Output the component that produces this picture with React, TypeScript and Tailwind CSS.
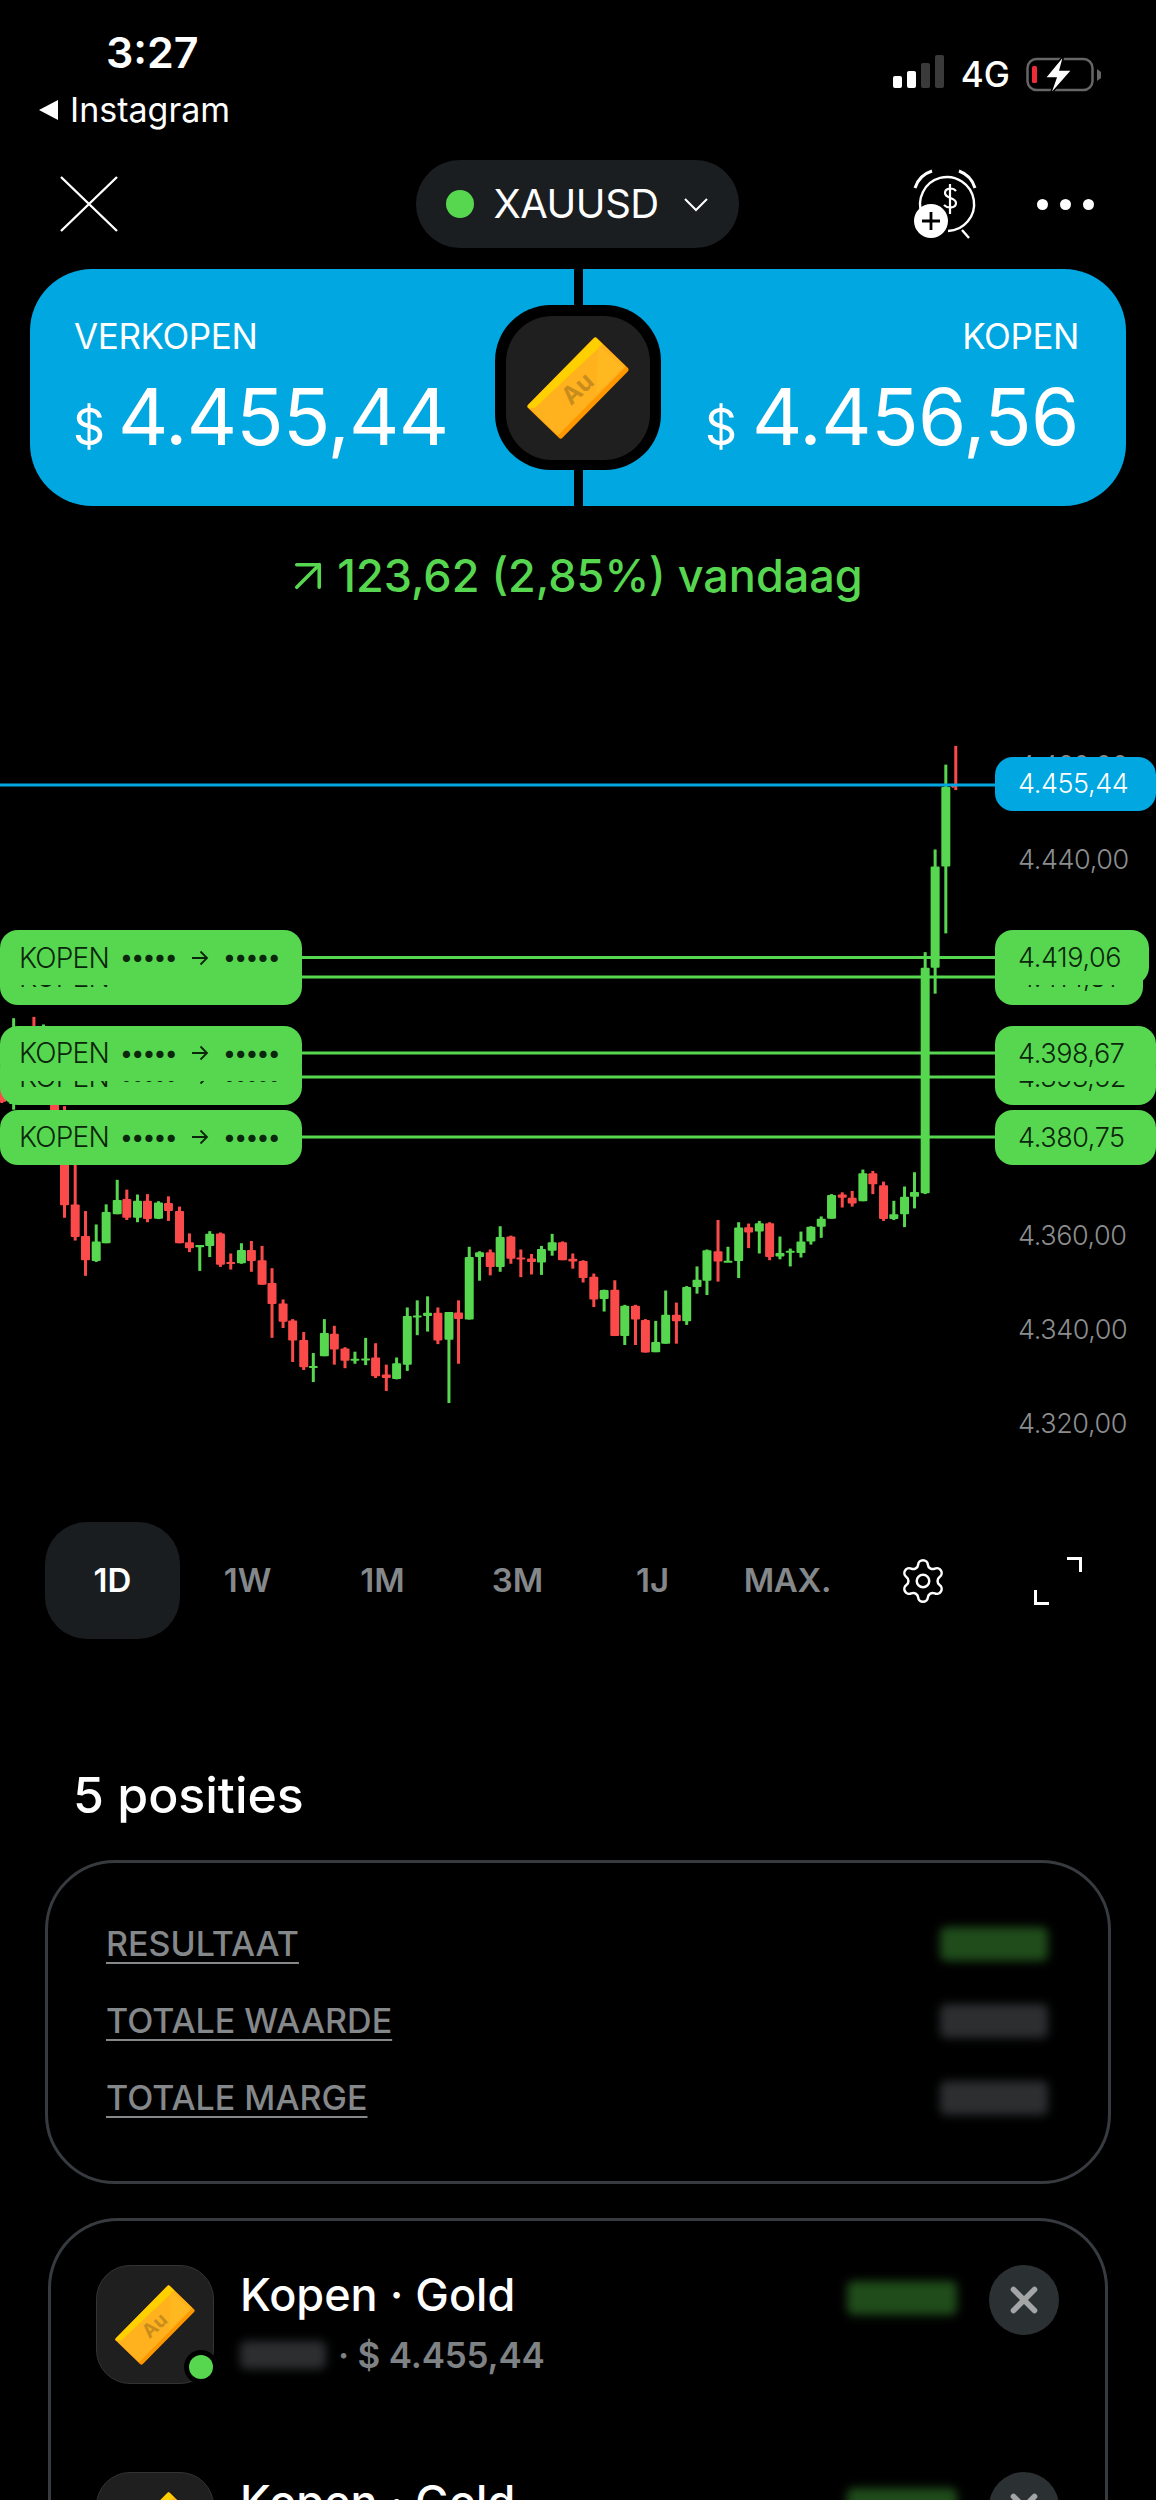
import React from "react";
import { ArrowUpRight, Settings, X } from "lucide-react";

// candles measured off the chart: [x, wickTop, wickBottom, bodyTop, bodyBottom, up]
type Candle = [number, number, number, number, number, number];

const candles: Candle[] = [
  [37, 668, 873, 720, 860, 1], [92, 665, 700, 690, 700, 0], [118, 682, 700, 690, 700, 1], [148, 700, 875, 720, 875, 0],
  [5, 800, 858, 810, 855, 0], [175, 865, 1115, 990, 1087, 0], [204, 995, 1166, 1085, 1158, 0], [232, 1100, 1245, 1156, 1210, 0],
  [261, 1130, 1214, 1168, 1212, 1], [288, 1085, 1172, 1102, 1172, 1], [318, 1030, 1107, 1075, 1107, 1], [344, 1052, 1120, 1073, 1115, 0],
  [373, 1063, 1125, 1077, 1115, 1], [400, 1062, 1125, 1077, 1118, 0], [430, 1078, 1118, 1081, 1117, 1], [457, 1067, 1122, 1082, 1100, 0],
  [487, 1090, 1172, 1100, 1172, 0], [514, 1150, 1192, 1170, 1183, 0], [542, 1176, 1234, 1176, 1181, 1], [569, 1145, 1203, 1151, 1178, 1],
  [598, 1148, 1225, 1150, 1220, 0], [626, 1195, 1231, 1214, 1218, 0], [655, 1172, 1218, 1187, 1217, 1], [682, 1167, 1236, 1187, 1212, 0],
  [711, 1178, 1265, 1210, 1265, 0], [738, 1228, 1384, 1261, 1308, 0], [768, 1298, 1362, 1307, 1348, 0], [794, 1342, 1438, 1345, 1390, 0],
  [824, 1371, 1456, 1389, 1450, 0], [850, 1418, 1483, 1447, 1450, 1], [880, 1342, 1425, 1373, 1425, 1], [907, 1357, 1444, 1375, 1410, 0],
  [936, 1405, 1452, 1408, 1435, 0], [963, 1415, 1442, 1431, 1435, 1], [992, 1384, 1445, 1430, 1433, 1], [1019, 1396, 1474, 1428, 1470, 0],
  [1048, 1444, 1503, 1466, 1474, 0], [1076, 1428, 1477, 1441, 1476, 1], [1105, 1316, 1458, 1335, 1444, 1], [1132, 1300, 1378, 1334, 1337, 1],
  [1160, 1291, 1370, 1328, 1335, 1], [1188, 1316, 1398, 1328, 1390, 0], [1218, 1326, 1530, 1326, 1388, 1], [1244, 1300, 1442, 1327, 1342, 0],
  [1273, 1180, 1343, 1203, 1343, 1], [1301, 1190, 1256, 1192, 1203, 1], [1330, 1186, 1244, 1192, 1225, 0], [1357, 1134, 1236, 1158, 1225, 1],
  [1386, 1155, 1218, 1157, 1207, 0], [1413, 1186, 1248, 1204, 1208, 0], [1442, 1196, 1242, 1206, 1214, 0], [1469, 1178, 1243, 1185, 1215, 1],
  [1498, 1151, 1200, 1170, 1189, 1], [1526, 1168, 1210, 1170, 1210, 0], [1554, 1195, 1229, 1207, 1213, 0],
  [1582, 1210, 1260, 1212, 1250, 0], [1611, 1240, 1315, 1247, 1298, 0], [1639, 1276, 1325, 1277, 1297, 1], [1668, 1255, 1380, 1276, 1380, 0],
  [1695, 1310, 1400, 1312, 1380, 1], [1724, 1310, 1400, 1312, 1343, 0], [1751, 1342, 1417, 1344, 1417, 0], [1779, 1346, 1416, 1393, 1416, 1],
  [1806, 1278, 1397, 1332, 1397, 1], [1835, 1305, 1397, 1332, 1347, 0], [1863, 1268, 1355, 1270, 1347, 1], [1891, 1224, 1285, 1254, 1270, 1],
  [1918, 1186, 1288, 1188, 1256, 1], [1948, 1120, 1258, 1190, 1213, 0], [1975, 1180, 1214, 1211, 1214, 1], [2004, 1125, 1250, 1137, 1212, 1],
  [2031, 1128, 1183, 1136, 1148, 0], [2060, 1122, 1195, 1127, 1146, 1], [2088, 1125, 1210, 1127, 1203, 0], [2116, 1157, 1208, 1194, 1202, 1],
  [2144, 1184, 1224, 1189, 1192, 1], [2173, 1146, 1204, 1168, 1194, 1], [2200, 1134, 1175, 1135, 1168, 1], [2228, 1112, 1160, 1117, 1135, 1],
  [2256, 1062, 1117, 1064, 1117, 1], [2285, 1058, 1092, 1063, 1070, 0], [2312, 1055, 1090, 1070, 1083, 0], [2341, 1007, 1078, 1015, 1078, 1],
  [2368, 1010, 1062, 1015, 1040, 0], [2397, 1034, 1122, 1042, 1118, 0], [2425, 1077, 1120, 1107, 1118, 1], [2454, 1045, 1136, 1068, 1107, 1],
  [2481, 1013, 1094, 1057, 1068, 1], [2510, 520, 1062, 555, 1060, 1], [2537, 290, 613, 328, 555, 1], [2566, 100, 478, 150, 328, 1],
  [2593, 58, 157, 145, 152, 0],
];

const CHART_TOP = 608;
const GREEN = "#57d750";
const RED = "#fb4a4a";

// chart was read off a crop scaled 2.713 x 2.24, starting at y=720
const cx = (v: number) => v / 2.713;
const cy = (v: number) => 720 + v / 2.24 - CHART_TOP;

const axis = [
  { label: "4.460,00", y: 766 },
  { label: "4.440,00", y: 860 },
  { label: "4.360,00", y: 1236 },
  { label: "4.340,00", y: 1330 },
  { label: "4.320,00", y: 1424 },
];

// order matters, the later ones sit on top of the earlier ones
const orders = [
  { y: 977, price: "4.414,81", w: 148 },
  { y: 957.5, price: "4.419,06", w: 154 },
  { y: 1077, price: "4.393,52", w: 161 },
  { y: 1053, price: "4.398,67", w: 161 },
  { y: 1137, price: "4.380,75", w: 161 },
];

const GoldBar = ({ size }: { size: number }) => (
  <svg width={size} height={size} viewBox="-50 -50 100 100">
    <polygon points="17,-47 47,-18 -17,47 -47,18" fill="#ff9800" stroke="#ff9800" strokeWidth="5" strokeLinejoin="round" />
    <polygon points="17,-47 44,-21 -20,44 -47,18" fill="#ffb21e" stroke="#ffb21e" strokeWidth="4" strokeLinejoin="round" />
    <polygon points="17,-48 22,-43 -43,18 -48,18" fill="#ffd000" stroke="#ffd000" strokeWidth="3" strokeLinejoin="round" />
    <polygon points="20,-42 44,-20 18,6" fill="#ffb81f" />
    <text x="-1" y="9" fontSize="24" fontWeight="700" fontFamily="Inter, sans-serif" fill="#c98d1d" textAnchor="middle" transform="rotate(-43 -1 0)">
      Au
    </text>
  </svg>
);

const Blob = ({ green, className }: { green?: boolean; className: string }) => (
  <div className={`rounded-md blur-[5px] ${green ? "bg-[#1f4c1a]" : "bg-[#2c2e30]"} ${className}`} />
);

const OrderTag = ({ y }: { y: number }) => (
  <div
    className="absolute left-0 w-[302px] h-[55px] rounded-[18px] bg-[#57d750] text-[#0a260b] flex items-center pl-[19px] text-[28px] font-light"
    style={{ top: y - CHART_TOP - 27.5 }}
  >
    <span className="w-[102px] tracking-[-0.8px]">KOPEN</span>
    <span className="w-[70px] text-[23px] tracking-[0.3px] font-bold">•••••</span>
    <span className="w-[33px]">
      <svg width="18" height="16" viewBox="0 0 18 16" fill="none" stroke="#0a260b" strokeWidth="1.8">
        <path d="M1 8h15M9.5 1.5 16 8l-6.500 6.500" />
      </svg>
    </span>
    <span className="text-[23px] tracking-[0.3px] font-bold">•••••</span>
  </div>
);

const PositionRow = () => (
  <div className="flex h-[207px] shrink-0 pl-[45px] pr-[46px]">
    <div className="relative w-[118px] h-[119px] rounded-[34px] bg-[#1f1f1f] border border-[#333] flex items-center justify-center">
      <GoldBar size={80} />
      <div className="absolute right-[-5px] bottom-[-1px] w-[34px] h-[34px] rounded-full bg-black flex items-center justify-center">
        <div className="w-[24px] h-[24px] rounded-full bg-[#57d750]" />
      </div>
    </div>
    <div className="ml-[26px] pt-[2px] flex-1">
      <div className="text-[45px] leading-[56px] font-medium text-white">Kopen · Gold</div>
      <div className="mt-[12px] flex items-center text-[35px] leading-[40px] font-semibold text-[#7f8284]">
        <Blob className="w-[86px] h-[28px]" />
        <span className="ml-[12px] tracking-[-0.2px]">· $ 4.455,44</span>
      </div>
    </div>
    <Blob green className="mt-[16px] w-[110px] h-[34px]" />
    <div className="ml-[32px] w-[70px] h-[70px] rounded-full bg-[#2b3033] flex items-center justify-center">
      <X size={42} strokeWidth={3.2} color="#a3a5a7" />
    </div>
  </div>
);

export default function App() {
  return (
    <div className="w-[1156px] h-[2500px] overflow-hidden bg-black text-white font-['Inter',sans-serif]">
      {/* status bar */}
      <div className="h-[160px] flex justify-between">
        <div className="pl-[38px] pt-[24px]">
          <div className="ml-[68px] text-[43px] leading-[56px] font-semibold">3:27</div>
          <div className="flex items-center mt-[10px] text-[34px] leading-[40px]">
            <svg width="20" height="22" viewBox="0 0 20 22" fill="white"><path d="M20 1v20L1 11z" /></svg>
            <span className="ml-[12px]">Instagram</span>
          </div>
        </div>
        <div className="flex items-start pt-[55px] pr-[54px]">
          <div className="flex items-end gap-[5px] h-[33px]">
            <div className="w-[9px] h-[12px] rounded-[2px] bg-white" />
            <div className="w-[9px] h-[17px] rounded-[2px] bg-white" />
            <div className="w-[9px] h-[25px] rounded-[2px] bg-[#3a3a3a]" />
            <div className="w-[9px] h-[33px] rounded-[2px] bg-[#3a3a3a]" />
          </div>
          <div className="ml-[17px] text-[35px] leading-[38px] font-medium">4G</div>
          <svg className="ml-[16px]" width="76" height="40" viewBox="0 0 76 40">
            <rect x="1.500" y="4" width="65" height="31" rx="9" fill="none" stroke="#666" strokeWidth="2.500" />
            <rect x="6" y="11" width="5" height="17" rx="1.500" fill="#ef2b38" />
            <path d="M71 14l4 3v6l-4 3z" fill="#666" />
            <path d="M38 0 19 23h11l-6 17 22-25H34z" fill="white" stroke="black" strokeWidth="1.500" />
          </svg>
        </div>
      </div>

      {/* top bar */}
      <div className="h-[88px] pl-[60px] pr-[62px] flex items-center">
        <div className="flex-1">
          <svg width="58" height="56" viewBox="0 0 58 56" stroke="white" strokeWidth="2.400">
            <path d="M1 1l56 54M57 1 1 55" />
          </svg>
        </div>
        <div className="w-[323px] h-[88px] rounded-[44px] bg-[#1b1e20] flex items-center pl-[30px]">
          <div className="w-[28px] h-[28px] rounded-full bg-[#57d750]" />
          <span className="ml-[20px] text-[40px] font-normal tracking-[-0.5px]">XAUUSD</span>
          <svg className="ml-[24px]" width="26" height="15" viewBox="0 0 26 15" fill="none" stroke="white" strokeWidth="2">
            <path d="M2 2l11 11L24 2" />
          </svg>
        </div>
        <div className="flex-1 flex items-center justify-end">
          <svg width="76" height="76" viewBox="0 0 76 76" fill="none" stroke="white" strokeWidth="2.400">
            <path d="M10 48A27 27 0 1 1 36 65" />
            <path d="M3 22A26 26 0 0 1 20 5M47 5A26 26 0 0 1 63 22" strokeWidth="3" />
            <path d="M50 64l7 8" />
            <path d="M44 25c-3-4-11-3-11 2 0 6 11 4 11 10 0 5-8 6-12 2M38 18v30" strokeWidth="2.200" />
            <circle cx="19" cy="55" r="17" fill="white" stroke="none" />
            <path d="M19 46v18M10 55h18" stroke="black" strokeWidth="2.800" />
          </svg>
          <div className="ml-[49px] flex gap-[12px]">
            <div className="w-[11px] h-[11px] rounded-full bg-white" />
            <div className="w-[11px] h-[11px] rounded-full bg-white" />
            <div className="w-[11px] h-[11px] rounded-full bg-white" />
          </div>
        </div>
      </div>

      {/* sell / buy */}
      <div className="relative mt-[21px] mx-[30px] h-[237px] flex gap-[9px]">
        <div className="w-[544px] rounded-l-[62px] bg-[#00a7e1] pl-[43px] pt-[47px]">
          <div className="text-[35px] leading-[40px] tracking-[-0.4px] pl-[1px]">VERKOPEN</div>
          <div className="mt-[22px] flex items-baseline">
            <span className="text-[50px] leading-[78px] mr-[13px]">$</span>
            <span className="text-[78px] leading-[78px] tracking-[-0.8px]">4.455,44</span>
          </div>
        </div>
        <div className="w-[543px] rounded-r-[62px] bg-[#00a7e1] pr-[47px] pt-[47px] text-right">
          <div className="text-[35px] leading-[40px] tracking-[-0.4px]">KOPEN</div>
          <div className="mt-[22px] flex items-baseline justify-end">
            <span className="text-[50px] leading-[78px] mr-[15px]">$</span>
            <span className="text-[78px] leading-[78px] tracking-[-0.5px]">4.456,56</span>
          </div>
        </div>
        <div className="absolute left-[465px] top-[36px] w-[166px] h-[165px] rounded-[56px] bg-black flex items-center justify-center">
          <div className="w-[144px] h-[144px] rounded-[46px] bg-[#1f1f1f] flex items-center justify-center">
            <GoldBar size={102} />
          </div>
        </div>
      </div>

      {/* day change */}
      <div className="h-[102px] pt-[38px] pr-[12px] flex items-center justify-center text-[#57d750] text-[45px] font-medium">
        <ArrowUpRight size={54} strokeWidth={1.600} className="mr-[2px]" />
        123,62 (2,85%) vandaag
      </div>

      {/* chart */}
      <div className="relative h-[914px] overflow-hidden">
        <svg className="absolute inset-0" width="1156" height="914">
          {candles.map(([x, wt, wb, bt, bb, up]) => {
            const color = up ? GREEN : RED;
            return (
              <g key={x} fill={color}>
                <rect x={cx(x) - 1.500} y={cy(wt)} width="3" height={cy(wb) - cy(wt)} />
                <rect x={cx(x) - 4.500} y={cy(bt)} width={x === 2593 ? 3 : 9} height={Math.max(cy(bb) - cy(bt), 2)} rx="1" />
              </g>
            );
          })}
          {orders.map((o) => (
            <rect key={o.y} x="0" y={o.y - CHART_TOP - 1.500} width="1000" height="3" fill={GREEN} />
          ))}
          <rect x="0" y={785 - CHART_TOP - 1.500} width="1000" height="3" fill="#00a7e1" />
        </svg>

        {axis.map((a) => (
          <div
            key={a.label}
            className="absolute left-[1018px] h-[36px] leading-[36px] text-[27px] font-light text-[#8b8d8f] tracking-[-0.4px]"
            style={{ top: a.y - CHART_TOP - 18 }}
          >
            {a.label}
          </div>
        ))}

        {orders.map((o) => (
          <React.Fragment key={o.price}>
            <OrderTag y={o.y} />
            <div
              className="absolute left-[995px] h-[55px] rounded-[18px] bg-[#57d750] pl-[23px] leading-[55px] text-[27px] font-light text-[#0a260b] tracking-[-0.4px]"
              style={{ top: o.y - CHART_TOP - 27.5, width: o.w }}
            >
              {o.price}
            </div>
          </React.Fragment>
        ))}

        <div
          className="absolute left-[995px] w-[161px] h-[54px] rounded-[18px] bg-[#00a7e1] pl-[23px] leading-[54px] text-[27px] font-light text-white tracking-[-0.4px]"
          style={{ top: 757 - CHART_TOP }}
        >
          4.455,44
        </div>
      </div>

      {/* ranges */}
      <div className="pl-[45px] h-[117px] flex items-center text-[33px] font-semibold text-[#85888a]">
        <div className="w-[135px] shrink-0 h-[117px] rounded-[42px] bg-[#1a1d1f] flex items-center justify-center text-white">1D</div>
        <div className="w-[135px] shrink-0 text-center">1W</div>
        <div className="w-[135px] shrink-0 text-center">1M</div>
        <div className="w-[135px] shrink-0 text-center">3M</div>
        <div className="w-[135px] shrink-0 text-center">1J</div>
        <div className="w-[135px] shrink-0 text-center tracking-[-0.3px]">MAX.</div>
        <div className="w-[135px] shrink-0 flex justify-center">
          <Settings size={50} strokeWidth={1.200} color="white" />
        </div>
        <div className="w-[135px] shrink-0 flex justify-center">
          <svg width="48" height="48" viewBox="0 0 48 48" fill="none" stroke="white" strokeWidth="3">
            <path d="M33 1.500h13.500V15M1.500 33v13.500H15" />
          </svg>
        </div>
      </div>

      {/* positions */}
      <div className="mt-[126px] pl-[73px] text-[50px] leading-[60px] font-medium">5 posities</div>

      <div className="mt-[35px] mx-[45px] h-[324px] rounded-[70px] border-[3px] border-[#373b3f] pl-[58px] pr-[60px] pt-[59px] flex flex-col gap-[33px]">
        {["RESULTAAT", "TOTALE WAARDE", "TOTALE MARGE"].map((label, i) => (
          <div key={label} className="flex items-center justify-between h-[44px]">
            <span className="text-[34px] leading-[44px] text-[#85888a] font-medium underline underline-offset-[6px] decoration-2">{label}</span>
            <Blob green={i === 0} className="w-[108px] h-[34px]" />
          </div>
        ))}
      </div>

      <div className="mt-[34px] mx-[48px] h-[400px] rounded-t-[70px] border-[3px] border-b-0 border-[#373b3f] pt-[44px] flex flex-col">
        <PositionRow />
        <PositionRow />
      </div>
    </div>
  );
}
